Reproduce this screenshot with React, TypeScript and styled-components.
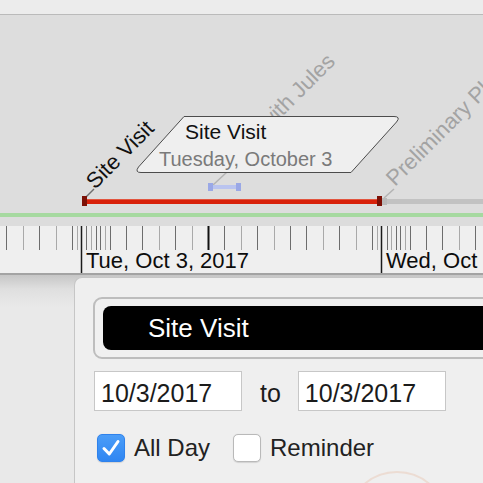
import React from "react";
import styled, { createGlobalStyle } from "styled-components";

const GlobalStyle = createGlobalStyle`
  html, body {
    margin: 0;
    padding: 0;
    overflow: hidden;
    background: #ebebeb;
  }
`;

const darkTicks = [6, 39, 72, 86, 96, 100, 110, 126, 142, 175, 224, 257, 290, 306, 339, 372, 387, 396, 400, 410, 426, 442, 475];
const lightTicks = [23, 56, 77, 91, 105, 159, 192, 241, 274, 323, 356, 377, 391, 405, 459];
const dayMarks = [
  { x: 81, label: "Tue, Oct 3, 2017" },
  { x: 381, label: "Wed, Oct 4, 2017" },
];

export default function App() {
  return (
    <Window>
      <GlobalStyle />
      <TopBand />
      <Canvas>
        <svg width="483" height="198" viewBox="0 15 483 198">
          <line x1="86" y1="197" x2="94" y2="189" stroke="#6f6f6f" strokeWidth="1.5" />
          <TimelineLabel transform="translate(95 190) rotate(-45)" fill="#111">
            Site Visit
          </TimelineLabel>

          <line x1="213" y1="185" x2="227" y2="172" stroke="#b4b4b4" strokeWidth="1.5" />
          <TimelineLabel transform="translate(229 170) rotate(-45)" fill="#a3a3a3">
            Meet with Jules
          </TimelineLabel>

          <line x1="384" y1="198" x2="394" y2="189" stroke="#b4b4b4" strokeWidth="1.5" />
          <TimelineLabel transform="translate(395 187) rotate(-45)" fill="#a3a3a3">
            Preliminary Plans
          </TimelineLabel>

          <rect x="210" y="185" width="29" height="4" fill="#bac4ef" />
          <rect x="208" y="183" width="5" height="8" fill="#9aa8e6" />
          <rect x="236" y="183" width="5" height="8" fill="#9aa8e6" />

          <rect x="383" y="199" width="100" height="5" fill="#c2c2c2" />
          <rect x="382" y="198" width="5" height="7" fill="#b9b9b9" />
          <rect x="84" y="199" width="295" height="5" fill="#d8210a" />
          <rect x="84" y="199" width="295" height="1" fill="#e2553f" />
          <rect x="82" y="196" width="5" height="10" fill="#7c1006" />
          <rect x="377" y="196" width="5" height="10" fill="#7c1006" />
        </svg>

        <Popup>
          <svg width="272" height="60" viewBox="0 0 272 60">
            <path
              d="M 51 1.5 H 261 Q 268 1.5 263.5 7 L 218 57.5 H 8 Q 1.5 57.5 5.5 52 Z"
              fill="#efefef"
              stroke="#4c4c4c"
              strokeWidth="1"
            />
          </svg>
          <PopupText $indent={52} $size={21} $color="#111">
            Site Visit
          </PopupText>
          <PopupText $indent={26} $size={20} $color="#7a7a7a">
            Tuesday, October 3
          </PopupText>
        </Popup>
      </Canvas>
      <Floor />
      <Ruler>
        <svg width="483" height="47" viewBox="0 226 483 47">
          {darkTicks.map((x) => (
            <line key={"d" + x} x1={x + 0.5} y1="226" x2={x + 0.5} y2="250" stroke="#6d6d6d" />
          ))}
          {lightTicks.map((x) => (
            <line key={"l" + x} x1={x + 0.5} y1="226" x2={x + 0.5} y2="250" stroke="#a9a9a9" />
          ))}
          <line x1="208.5" y1="226" x2="208.5" y2="250" stroke="#111" strokeWidth="2" />
          {dayMarks.map((d) => (
            <g key={d.x}>
              <line x1={d.x + 0.5} y1="226" x2={d.x + 0.5} y2="273" stroke="#1a1a1a" strokeWidth="1.5" />
              <RulerLabel x={d.x + 5} y="268">
                {d.label}
              </RulerLabel>
            </g>
          ))}
        </svg>
      </Ruler>
      <Lower>
        <Gutter />
        <Panel>
          <TitleBox>
            <TitleField>Site Visit</TitleField>
          </TitleBox>
          <DateRow>
            <DateField>10/3/2017</DateField>
            <To>to</To>
            <DateField>10/3/2017</DateField>
          </DateRow>
          <OptionRow>
            <Option>
              <Box $checked>
                <svg width="28" height="28" viewBox="0 0 28 28">
                  <path d="M 7 14.5 L 12.3 20 L 21 7.5" fill="none" stroke="#fff" strokeWidth="3" strokeLinecap="round" strokeLinejoin="round" />
                </svg>
              </Box>
              <OptionLabel>All Day</OptionLabel>
            </Option>
            <Option>
              <Box />
              <OptionLabel>Reminder</OptionLabel>
            </Option>
          </OptionRow>
          <ColorWell />
        </Panel>
      </Lower>
    </Window>
  );
}

const Window = styled.div`
  width: 483px;
  height: 483px;
  overflow: hidden;
  display: flex;
  flex-direction: column;
  font-family: "Liberation Sans", Arial, sans-serif;
`;

const TopBand = styled.div`
  flex: none;
  height: 14px;
  background: #ececec;
  border-bottom: 1px solid #bababa;
`;

const Canvas = styled.div`
  flex: none;
  position: relative;
  height: 198px;
  background: #dddddd;
  overflow: hidden;

  svg {
    display: block;
  }
`;

const TimelineLabel = styled.text`
  font-family: "Liberation Sans", Arial, sans-serif;
  font-size: 22px;
`;

const Popup = styled.div`
  position: absolute;
  left: 133px;
  top: 100px;
  width: 272px;
  height: 60px;
  display: flex;
  flex-direction: column;
  gap: 7px;
  padding-top: 6px;
  box-sizing: border-box;

  svg {
    position: absolute;
    left: 0;
    top: 0;
  }
`;

const PopupText = styled.div<{ $indent: number; $size: number; $color: string }>`
  position: relative;
  padding-left: ${(p) => p.$indent}px;
  font-size: ${(p) => p.$size}px;
  line-height: ${(p) => p.$size}px;
  color: ${(p) => p.$color};
  white-space: nowrap;
`;

const Floor = styled.div`
  flex: none;
  height: 9px;
  background: #dcdcdc;
  border-top: 4px solid #a6d9a0;
`;

const Ruler = styled.div`
  flex: none;
  height: 47px;
  background: #efefef;
  border-bottom: 2px solid #a3a3a3;

  svg {
    display: block;
  }
`;

const RulerLabel = styled.text`
  font-family: "Liberation Sans", Arial, sans-serif;
  font-size: 22px;
  fill: #0c0c0c;
`;

const Lower = styled.div`
  flex: 1;
  display: flex;
  background: linear-gradient(to bottom, #c6c6c6 0, #dfdfdf 14px, #e9e9e9 32px);
`;

const Gutter = styled.div`
  flex: none;
  width: 74px;
`;

const Panel = styled.div`
  flex: none;
  width: 460px;
  margin-top: 2px;
  padding: 19px 0 0 18px;
  background: #efefef;
  border-top: 1px solid #c6c6c6;
  border-left: 1px solid #c6c6c6;
  border-top-left-radius: 8px;
  display: flex;
  flex-direction: column;
  align-items: flex-start;
`;

const TitleBox = styled.div`
  width: 430px;
  padding: 7px 8px;
  border: 2px solid #bdbdbd;
  border-radius: 9px;
  background: #f0f0f0;
`;

const TitleField = styled.div`
  height: 44px;
  line-height: 44px;
  padding-left: 45px;
  border-radius: 8px;
  background: #000;
  color: #fff;
  font-size: 26px;
`;

const DateRow = styled.div`
  display: flex;
  align-items: baseline;
  margin: 12px 0 0 1px;
`;

const DateField = styled.div`
  box-sizing: border-box;
  width: 148px;
  height: 40px;
  padding: 7px 6px 0;
  background: #fff;
  border: 1px solid #c7c7c7;
  font-size: 25px;
  color: #1b1b1b;
`;

const To = styled.span`
  padding: 0 17px 0 18px;
  font-size: 25px;
  color: #1b1b1b;
`;

const OptionRow = styled.div`
  display: flex;
  gap: 23px;
  margin: 23px 0 0 4px;
`;

const Option = styled.div`
  display: flex;
  align-items: center;
  gap: 9px;
`;

const Box = styled.div<{ $checked?: boolean }>`
  box-sizing: border-box;
  width: 28px;
  height: 28px;
  border-radius: 5px;
  background: ${(p) => (p.$checked ? "linear-gradient(#4b9df8, #2f86f2)" : "#fff")};
  border: 1px solid ${(p) => (p.$checked ? "#2f82ec" : "#b9b9b9")};
  box-shadow: 0 0.5px 1px rgba(0, 0, 0, 0.12);

  svg {
    display: block;
    margin: -1px;
  }
`;

const OptionLabel = styled.span`
  font-size: 24px;
  color: #222;
`;

const ColorWell = styled.div`
  flex: none;
  width: 102px;
  height: 102px;
  margin: 9px 0 0 253px;
  border-radius: 50%;
  border: 2px solid #ecdcd3;
  box-sizing: border-box;
`;
